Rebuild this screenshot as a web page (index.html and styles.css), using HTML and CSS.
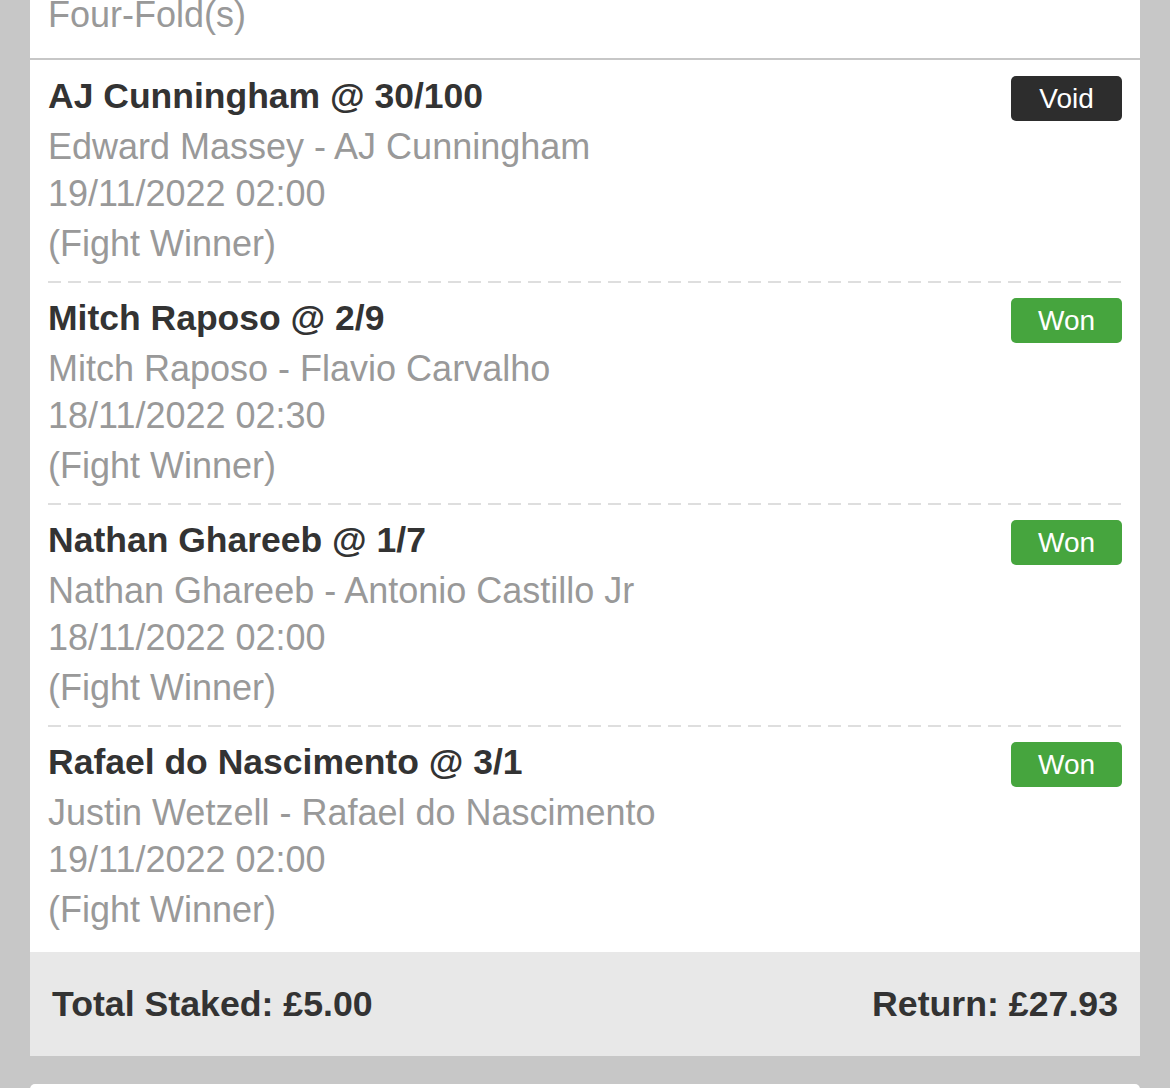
FILE: index.html
```html
<!DOCTYPE html>
<html lang="en">
  <head>
    <meta charset="UTF-8" />
    <meta name="viewport" content="width=device-width, initial-scale=1.0" />
    <title>Settled Bets</title>
    <link rel="stylesheet" href="styles.css">
  </head>
  <body>
    <div class="slip">
      <div class="slip-type">Four-Fold(s)</div>

      <div class="selection">
        <div class="selection-info">
          <div class="pick">AJ Cunningham @ 30/100</div>
          <div class="event">Edward Massey - AJ Cunningham</div>
          <div class="date">19/11/2022 02:00</div>
          <div class="market">(Fight Winner)</div>
        </div>
        <span class="result void">Void</span>
      </div>

      <div class="selection">
        <div class="selection-info">
          <div class="pick">Mitch Raposo @ 2/9</div>
          <div class="event">Mitch Raposo - Flavio Carvalho</div>
          <div class="date">18/11/2022 02:30</div>
          <div class="market">(Fight Winner)</div>
        </div>
        <span class="result won">Won</span>
      </div>

      <div class="selection">
        <div class="selection-info">
          <div class="pick">Nathan Ghareeb @ 1/7</div>
          <div class="event">Nathan Ghareeb - Antonio Castillo Jr</div>
          <div class="date">18/11/2022 02:00</div>
          <div class="market">(Fight Winner)</div>
        </div>
        <span class="result won">Won</span>
      </div>

      <div class="selection">
        <div class="selection-info">
          <div class="pick">Rafael do Nascimento @ 3/1</div>
          <div class="event">Justin Wetzell - Rafael do Nascimento</div>
          <div class="date">19/11/2022 02:00</div>
          <div class="market">(Fight Winner)</div>
        </div>
        <span class="result won">Won</span>
      </div>

      <div class="slip-footer">
        <span>Total Staked: £5.00</span>
        <span>Return: £27.93</span>
      </div>
    </div>

    <div class="slip next"></div>
  </body>
</html>
```

FILE: styles.css
```css
body {
  font-family: "Liberation Sans", Arial, Helvetica, sans-serif;
  margin: 0;
  padding: 0 30px;
  background-color: #c7c7c7;
  overflow: hidden;
}
.slip {
  background-color: #fff;
  margin-top: -8px;
  margin-bottom: 28px;
}
.slip.next {
  margin: 0;
  height: 200px;
  border-radius: 5px 5px 0 0;
}
.slip-type {
  padding: 0 18px 20px;
  font-size: 36px;
  line-height: 46px;
  color: #999;
  border-bottom: 2px solid #c7c7c7;
}
.selection {
  display: flex;
  justify-content: space-between;
  align-items: flex-start;
  padding: 12px 18px 14px;
  position: relative;
}
/* dashed divider between selections */
.selection + .selection::before {
  content: "";
  position: absolute;
  top: -1px;
  left: 18px;
  right: 18px;
  height: 2px;
  background: repeating-linear-gradient(
    to right,
    #dedede 0,
    #dedede 13px,
    transparent 13px,
    transparent 20px
  );
}
.selection + .selection {
  margin-top: 1px;
}
/* last selection sits right above the footer */
.selection:nth-last-child(2) {
  padding-bottom: 19px;
}
.pick {
  font-size: 35.5px;
  line-height: 48px;
  font-weight: bold;
  color: #333;
}
.event,
.date,
.market {
  font-size: 36px;
  color: #999;
  line-height: 46px;
}
.event {
  line-height: 48px;
  margin-top: 3px;
}
.market {
  margin-top: 4px;
}
.result {
  margin-top: 4px;
  width: 111px;
  height: 45px;
  line-height: 45px;
  text-align: center;
  font-size: 28px;
  color: #fff;
  border-radius: 5px;
}
.result.void {
  background-color: #2d2d2d;
}
.result.won {
  background-color: #46a53e;
}
.slip-footer {
  display: flex;
  justify-content: space-between;
  align-items: center;
  height: 104px;
  padding: 0 22px;
  background-color: #e8e8e8;
  font-size: 35.7px;
  font-weight: bold;
  color: #333;
}
```
